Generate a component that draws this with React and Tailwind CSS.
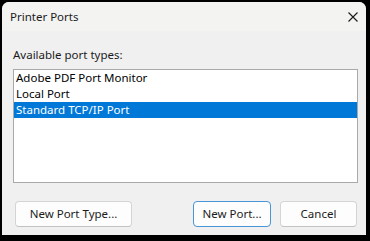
import React from 'react';

const ports = ['Adobe PDF Port Monitor', 'Local Port', 'Standard TCP/IP Port'];

function CloseIcon() {
    return (
        <svg width="10" height="10" viewBox="0 0 10 10" className="block">
            <path d="M0.5 0.5 L9.5 9.5 M9.5 0.5 L0.5 9.5" stroke="#1a1a1a" strokeWidth="1.1" fill="none" />
        </svg>
    );
}

function Button({ children, primary, className = '' }) {
    return (
        <button
            className={`h-[26px] rounded-[4px] bg-[#fdfdfd] text-[11.5px] leading-[16px] text-[#1b1b1b] border ${
                primary ? 'border-[#4a94d8]' : 'border-[#d4d4d4] border-b-[#c2c2c2]'
            } ${className}`}
        >
            {children}
        </button>
    );
}

export default function App() {
    const selected = 2;

    return (
        <div className="w-[370px] h-[241px] bg-black pt-[2px] pl-[2px] font-['Noto_Sans','Open_Sans',sans-serif]">
            <div className="w-[364px] h-[233px] rounded-t-[7px] bg-[#f0f0f0] flex flex-col overflow-hidden">
                {/* Title bar */}
                <div className="h-[29px] bg-[#f3f3f1] flex items-center justify-between pl-[8px] pr-[8px] shrink-0">
                    <span className="text-[11.5px] leading-[16px] text-[#1b1b1b]">Printer Ports</span>
                    <CloseIcon />
                </div>

                {/* Body */}
                <div className="flex flex-col px-[11px] pt-[16px]">
                    <label className="text-[11.5px] leading-[16px] text-[#1b1b1b]">Available port types:</label>

                    <div className="mt-[6px] w-[345px] h-[114px] bg-white border border-[#a9a9a9] flex flex-col">
                        {ports.map((port, i) => (
                            <div
                                key={port}
                                className={`h-[16px] pl-[2px] text-[11.5px] leading-[16px] whitespace-nowrap ${
                                    i === selected ? 'bg-[#0078d7] text-white' : 'text-black'
                                }`}
                            >
                                {port}
                            </div>
                        ))}
                    </div>

                    <div className="mt-[18px] flex items-center w-[345px] pl-[2px] pr-[1px]">
                        <Button className="w-[117px]">New Port Type...</Button>
                        <div className="flex-1" />
                        <Button primary className="w-[78px]">New Port...</Button>
                        <Button className="w-[77px] ml-[9px]">Cancel</Button>
                    </div>
                </div>
            </div>
        </div>
    );
}
